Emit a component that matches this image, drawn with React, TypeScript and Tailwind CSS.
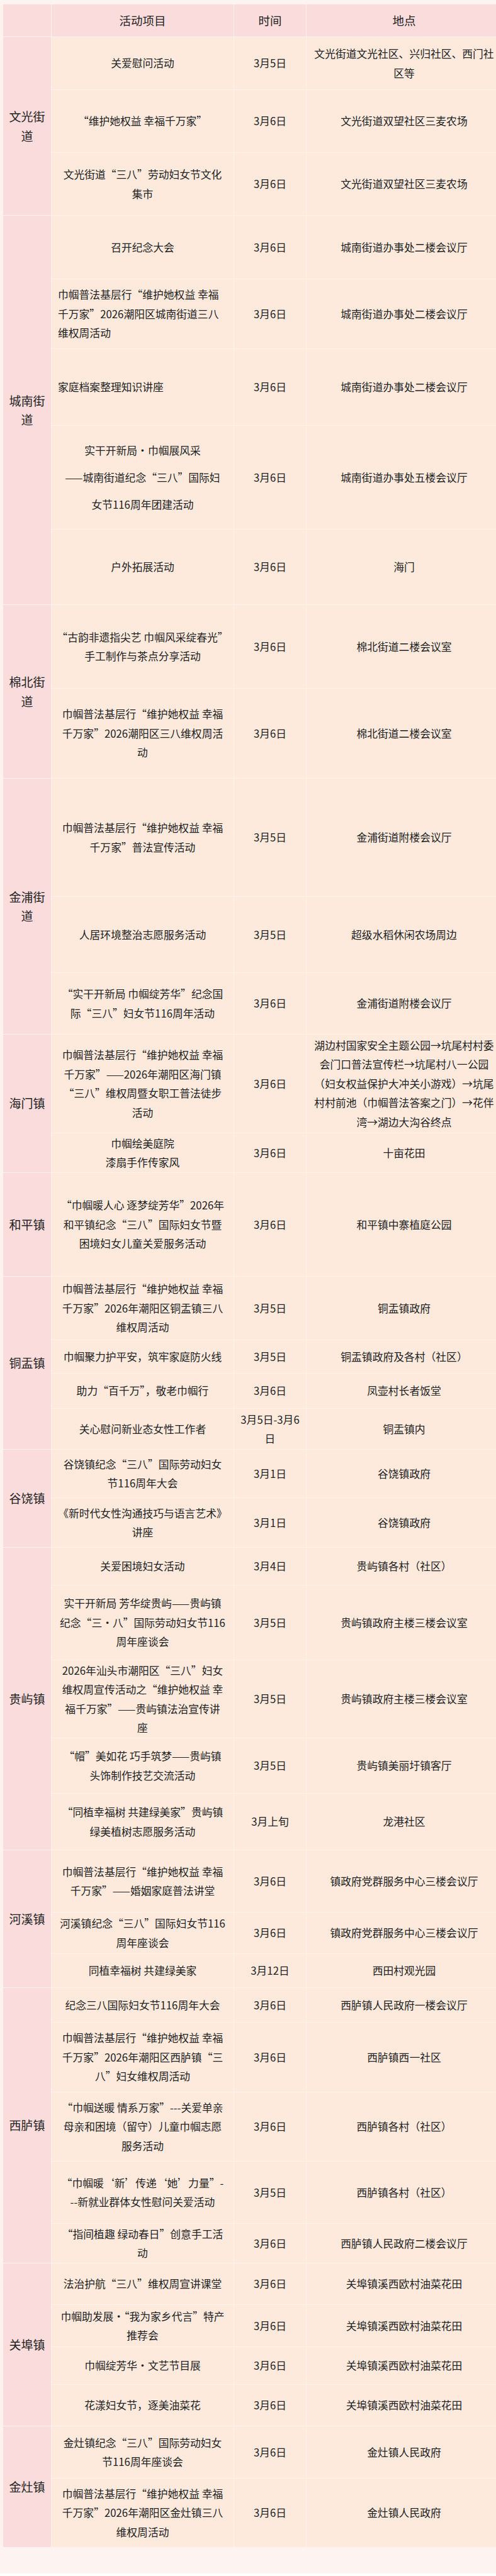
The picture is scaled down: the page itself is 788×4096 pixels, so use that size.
import React from 'react';

type Row = {
  h: string;
  act: string[];
  time: string[];
  place: string[];
  left?: boolean;
  loose?: boolean;
};

type Group = { label: string[]; rows: Row[] };

const PUFA = '巾帼普法基层行“维护她权益 幸福';

const groups: Group[] = [
  {
    label: ['文光街', '道'],
    rows: [
      { h: 'h-[84px]', act: ['关爱慰问活动'], time: ['3月5日'], place: ['文光街道文光社区、兴归社区、西门社', '区等'] },
      { h: 'h-[100px]', act: ['“维护她权益 幸福千万家”'], time: ['3月6日'], place: ['文光街道双望社区三麦农场'] },
      { h: 'h-[100px]', act: ['文光街道“三八”劳动妇女节文化', '集市'], time: ['3月6日'], place: ['文光街道双望社区三麦农场'] },
    ],
  },
  {
    label: ['城南街', '道'],
    rows: [
      { h: 'h-[101px]', act: ['召开纪念大会'], time: ['3月6日'], place: ['城南街道办事处二楼会议厅'] },
      { h: 'h-[111px]', left: true, act: [PUFA, '千万家”2026潮阳区城南街道三八', '维权周活动'], time: ['3月6日'], place: ['城南街道办事处二楼会议厅'] },
      { h: 'h-[122px]', left: true, act: ['家庭档案整理知识讲座'], time: ['3月6日'], place: ['城南街道办事处二楼会议厅'] },
      { h: 'h-[165px]', loose: true, act: ['实干开新局·巾帼展风采', '——城南街道纪念“三八”国际妇', '女节116周年团建活动'], time: ['3月6日'], place: ['城南街道办事处五楼会议厅'] },
      { h: 'h-[120px]', act: ['户外拓展活动'], time: ['3月6日'], place: ['海门'] },
    ],
  },
  {
    label: ['棉北街', '道'],
    rows: [
      { h: 'h-[133px]', act: ['“古韵非遗指尖艺 巾帼风采绽春光”', '手工制作与茶点分享活动'], time: ['3月6日'], place: ['棉北街道二楼会议室'] },
      { h: 'h-[143px]', act: [PUFA, '千万家”2026潮阳区三八维权周活', '动'], time: ['3月6日'], place: ['棉北街道二楼会议室'] },
    ],
  },
  {
    label: ['金浦街', '道'],
    rows: [
      { h: 'h-[188px]', act: [PUFA, '千万家”普法宣传活动'], time: ['3月5日'], place: ['金浦街道附楼会议厅'] },
      { h: 'h-[121px]', act: ['人居环境整治志愿服务活动'], time: ['3月5日'], place: ['超级水稻休闲农场周边'] },
      { h: 'h-[98px]', act: ['“实干开新局 巾帼绽芳华”纪念国', '际“三八”妇女节116周年活动'], time: ['3月6日'], place: ['金浦街道附楼会议厅'] },
    ],
  },
  {
    label: ['海门镇'],
    rows: [
      {
        h: 'h-[157px]',
        act: [PUFA, '千万家”——2026年潮阳区海门镇', '“三八”维权周暨女职工普法徒步', '活动'],
        time: ['3月6日'],
        place: ['湖边村国家安全主题公园→坑尾村村委', '会门口普法宣传栏→坑尾村八一公园', '（妇女权益保护大冲关小游戏）→坑尾', '村村前池（巾帼普法答案之门）→花伴', '湾→湖边大沟谷终点'],
      },
      { h: 'h-[63px]', act: ['巾帼绘美庭院', '漆扇手作传家风'], time: ['3月6日'], place: ['十亩花田'] },
    ],
  },
  {
    label: ['和平镇'],
    rows: [
      { h: 'h-[165px]', act: ['“巾帼暖人心 逐梦绽芳华”2026年', '和平镇纪念“三八”国际妇女节暨', '困境妇女儿童关爱服务活动'], time: ['3月6日'], place: ['和平镇中寨植庭公园'] },
    ],
  },
  {
    label: ['铜盂镇'],
    rows: [
      { h: 'h-[101px]', act: [PUFA, '千万家”2026年潮阳区铜盂镇三八', '维权周活动'], time: ['3月5日'], place: ['铜盂镇政府'] },
      { h: 'h-[53px]', act: ['巾帼聚力护平安，筑牢家庭防火线'], time: ['3月5日'], place: ['铜盂镇政府及各村（社区）'] },
      { h: 'h-[56px]', act: ['助力“百千万”，敬老巾帼行'], time: ['3月6日'], place: ['凤壶村长者饭堂'] },
      { h: 'h-[65px]', act: ['关心慰问新业态女性工作者'], time: ['3月5日-3月6', '日'], place: ['铜盂镇内'] },
    ],
  },
  {
    label: ['谷饶镇'],
    rows: [
      { h: 'h-[77px]', act: ['谷饶镇纪念“三八”国际劳动妇女', '节116周年大会'], time: ['3月1日'], place: ['谷饶镇政府'] },
      { h: 'h-[79px]', act: ['《新时代女性沟通技巧与语言艺术》', '讲座'], time: ['3月1日'], place: ['谷饶镇政府'] },
    ],
  },
  {
    label: ['贵屿镇'],
    rows: [
      { h: 'h-[60px]', act: ['关爱困境妇女活动'], time: ['3月4日'], place: ['贵屿镇各村（社区）'] },
      { h: 'h-[119px]', act: ['实干开新局 芳华绽贵屿——贵屿镇', '纪念“三·八”国际劳动妇女节116', '周年座谈会'], time: ['3月5日'], place: ['贵屿镇政府主楼三楼会议室'] },
      { h: 'h-[124px]', act: ['2026年汕头市潮阳区“三八”妇女', '维权周宣传活动之“维护她权益 幸', '福千万家”——贵屿镇法治宣传讲', '座'], time: ['3月5日'], place: ['贵屿镇政府主楼三楼会议室'] },
      { h: 'h-[88px]', act: ['“帽”美如花 巧手筑梦——贵屿镇', '头饰制作技艺交流活动'], time: ['3月5日'], place: ['贵屿镇美丽圩镇客厅'] },
      { h: 'h-[90px]', act: ['“同植幸福树 共建绿美家”贵屿镇', '绿美植树志愿服务活动'], time: ['3月上旬'], place: ['龙港社区'] },
    ],
  },
  {
    label: ['河溪镇'],
    rows: [
      { h: 'h-[99px]', act: [PUFA, '千万家”——婚姻家庭普法讲堂'], time: ['3月6日'], place: ['镇政府党群服务中心三楼会议厅'] },
      { h: 'h-[66px]', act: ['河溪镇纪念“三八”国际妇女节116', '周年座谈会'], time: ['3月6日'], place: ['镇政府党群服务中心三楼会议厅'] },
      { h: 'h-[54px]', act: ['同植幸福树 共建绿美家'], time: ['3月12日'], place: ['西田村观光园'] },
    ],
  },
  {
    label: ['西胪镇'],
    rows: [
      { h: 'h-[55px]', act: ['纪念三八国际妇女节116周年大会'], time: ['3月6日'], place: ['西胪镇人民政府一楼会议厅'] },
      { h: 'h-[111px]', act: [PUFA, '千万家”2026年潮阳区西胪镇“三', '八”妇女维权周活动'], time: ['3月6日'], place: ['西胪镇西一社区'] },
      { h: 'h-[110px]', act: ['“巾帼送暖 情系万家”---关爱单亲', '母亲和困境（留守）儿童巾帼志愿', '服务活动'], time: ['3月6日'], place: ['西胪镇各村（社区）'] },
      { h: 'h-[99px]', act: ['“巾帼暖‘新’传递‘她’力量”-', '--新就业群体女性慰问关爱活动'], time: ['3月5日'], place: ['西胪镇各村（社区）'] },
      { h: 'h-[63px]', act: ['“指间植趣 绿动春日”创意手工活', '动'], time: ['3月6日'], place: ['西胪镇人民政府二楼会议厅'] },
    ],
  },
  {
    label: ['关埠镇'],
    rows: [
      { h: 'h-[66px]', act: ['法治护航“三八”维权周宣讲课堂'], time: ['3月6日'], place: ['关埠镇溪西欧村油菜花田'] },
      { h: 'h-[67px]', act: ['巾帼助发展·“我为家乡代言”特产', '推荐会'], time: ['3月6日'], place: ['关埠镇溪西欧村油菜花田'] },
      { h: 'h-[60px]', act: ['巾帼绽芳华·文艺节目展'], time: ['3月6日'], place: ['关埠镇溪西欧村油菜花田'] },
      { h: 'h-[66px]', act: ['花漾妇女节，逐美油菜花'], time: ['3月6日'], place: ['关埠镇溪西欧村油菜花田'] },
    ],
  },
  {
    label: ['金灶镇'],
    rows: [
      { h: 'h-[83px]', act: ['金灶镇纪念“三八”国际劳动妇女', '节116周年座谈会'], time: ['3月6日'], place: ['金灶镇人民政府'] },
      { h: 'h-[110px]', act: [PUFA, '千万家”2026年潮阳区金灶镇三八', '维权周活动'], time: ['3月6日'], place: ['金灶镇人民政府'] },
    ],
  },
];

const Lines = ({ lines, loose }: { lines: string[]; loose?: boolean }) => (
  <>
    {lines.map((l, i) => (
      <div key={i} className={`whitespace-nowrap ${loose ? 'leading-[43px]' : 'leading-[30.5px]'}`}>
        {l}
      </div>
    ))}
  </>
);

const cell = 'border border-[#fdf3ec] bg-[#fdeadd] align-middle p-0';
const pinkCell = 'border border-[#fdf3ec] bg-[#f9dcdb] align-middle p-0';

export default function App() {
  return (
    <div
      className="w-[788px] overflow-hidden bg-[#fdf3f0] pt-[6px] pb-[41px] pl-[4px] text-[#222222]"
      style={{ fontFamily: '"Noto Sans CJK SC", "Noto Sans", sans-serif' }}
    >
      <table className="w-[793px] table-fixed border-collapse">
        <colgroup>
          <col className="w-[77px]" />
          <col className="w-[290px]" />
          <col className="w-[115px]" />
          <col className="w-[311px]" />
        </colgroup>
        <thead>
          <tr className="h-[52px] text-[18.5px]">
            <th className={pinkCell}></th>
            <th className={`${pinkCell} font-normal text-center`}>活动项目</th>
            <th className={`${pinkCell} font-normal text-center`}>时间</th>
            <th className={`${pinkCell} font-normal text-center`}>地点</th>
          </tr>
        </thead>
        <tbody className="text-[16.8px]">
          {groups.map((g, gi) =>
            g.rows.map((r, i) => (
              <tr key={`${gi}-${i}`} className={r.h}>
                {i === 0 && (
                  <td rowSpan={g.rows.length} className={`${pinkCell} text-center text-[19px]`}>
                    <Lines lines={g.label} />
                  </td>
                )}
                <td className={`${cell} ${r.left ? 'text-left pl-[10px]' : 'text-center'}`}>
                  <Lines lines={r.act} loose={r.loose} />
                </td>
                <td className={`${cell} text-center`}>
                  <Lines lines={r.time} />
                </td>
                <td className={`${cell} text-center`}>
                  <Lines lines={r.place} />
                </td>
              </tr>
            ))
          )}
        </tbody>
      </table>
    </div>
  );
}
